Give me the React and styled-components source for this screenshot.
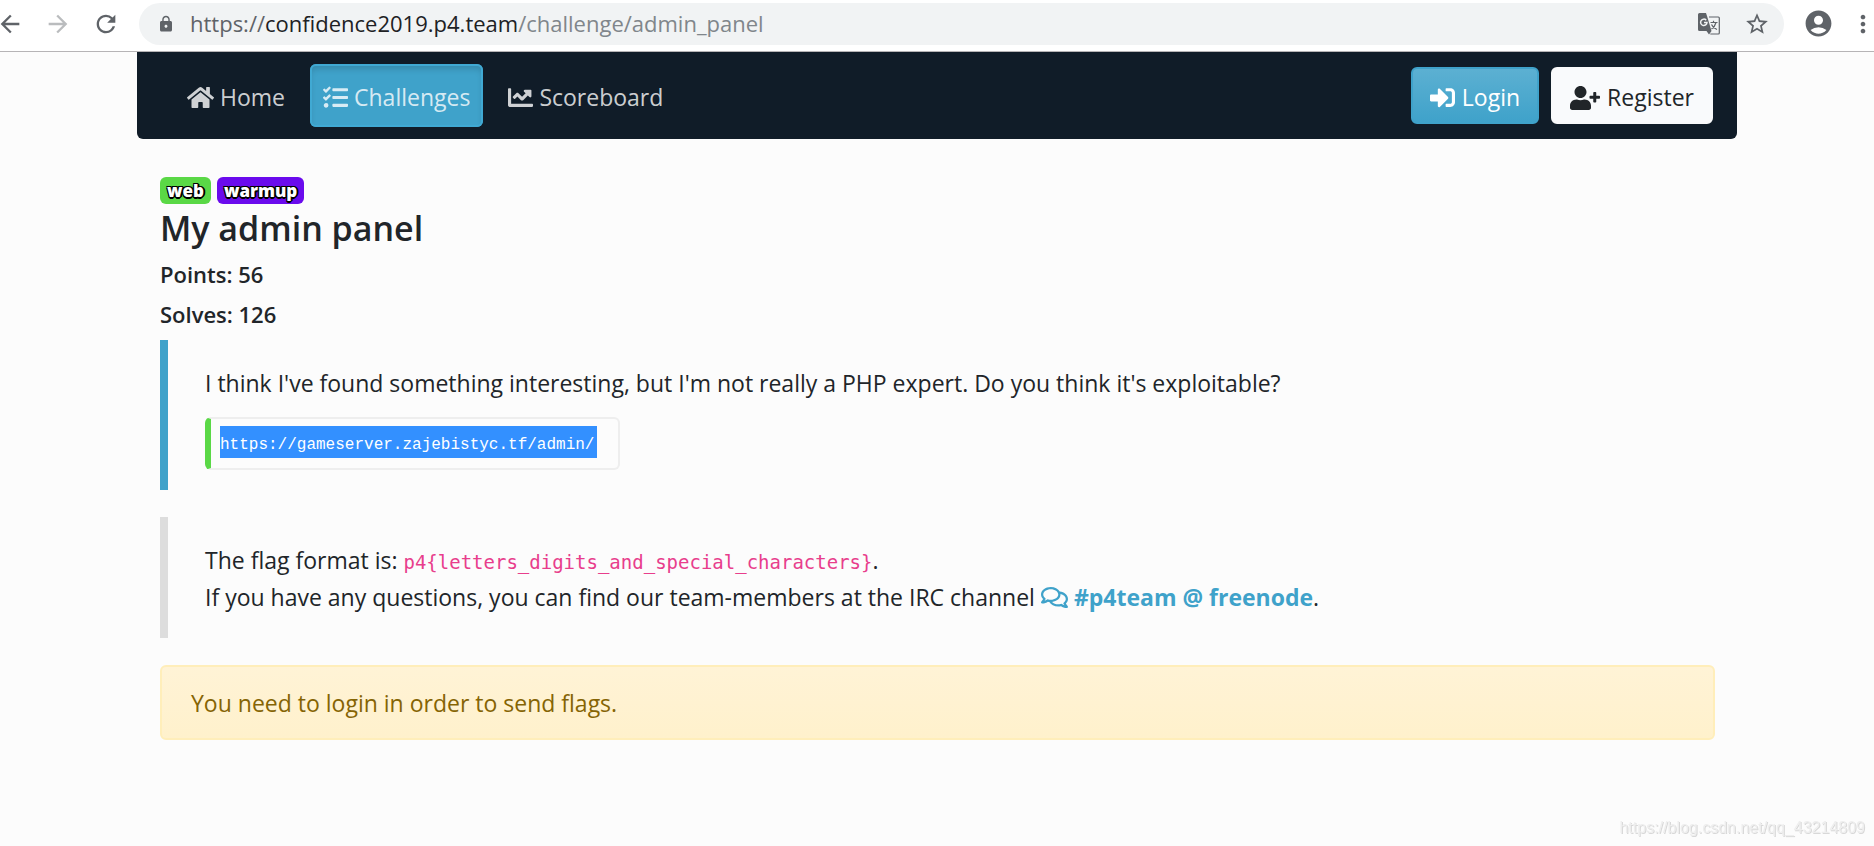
import React from 'react'
import styled, { createGlobalStyle } from 'styled-components'
import {
  FaHome,
  FaTasks,
  FaChartLine,
  FaSignInAlt,
  FaUserPlus,
  FaRegComments,
} from 'react-icons/fa'
import {
  MdArrowBack,
  MdArrowForward,
  MdRefresh,
  MdLock,
  MdStarBorder,
  MdAccountCircle,
  MdMoreVert,
} from 'react-icons/md'

const colors = {
  primary: '#3fa2ca',
  success: '#5ad846',
  text: '#212529',
  chrome: '#5f6368',
}

const GlobalStyle = createGlobalStyle`
  * {
    box-sizing: border-box;
  }

  body {
    margin: 0;
    background: #fcfcfc;
    color: ${colors.text};
    font-family: 'Open Sans', 'Noto Sans', sans-serif;
    font-size: 23px;
    line-height: 37px;
  }
`

const BrowserBar = styled.header`
  display: flex;
  align-items: center;
  height: 52px;
  padding: 0 0 4px;
  background: #ffffff;
  border-bottom: 1px solid #b6b4b6;
  overflow: hidden;
`

const ChromeButton = styled.button`
  display: flex;
  flex: 0 0 ${p => p.$width || 48}px;
  align-items: center;
  justify-content: center;
  min-width: 0;
  padding: 0;
  border: 0;
  background: none;
  color: ${p => (p.disabled ? '#babcbe' : colors.chrome)};
  font-size: ${p => p.$size || 28}px;

  svg {
    flex-shrink: 0;
  }
`

const HistoryButtons = styled.div`
  display: flex;
  margin: 0 9px 0 -14px;
`

const AddressBar = styled.div`
  display: flex;
  flex: 1;
  align-items: center;
  height: 42px;
  padding: 0 3px 0 18px;
  border-radius: 21px;
  background: #f1f3f4;
  color: ${colors.chrome};
  font-size: 18px;
`

const Address = styled.div`
  flex: 1;
  margin-left: 15px;
  color: #80868b;
  font-size: 22px;
  white-space: nowrap;

  span {
    color: ${colors.chrome};
  }

  strong {
    color: #202124;
    font-weight: 400;
  }
`

const Container = styled.div`
  max-width: 1600px;
  margin: 0 auto;
`

const Navbar = styled.nav`
  display: flex;
  align-items: center;
  justify-content: space-between;
  padding: 12px 24px;
  border-radius: 0 0 6px 6px;
  background: #101c28;
`

const NavGroup = styled.div`
  display: flex;
  align-items: center;
  gap: 12px;
`

const NavLink = styled.a`
  display: flex;
  align-items: center;
  gap: 6px;
  padding: 15px 13px 11px;
  margin-left: ${p => (p.$first ? 13 : 0)}px;
  border-radius: 6px;
  color: rgba(255, 255, 255, 0.8);
  text-decoration: none;

  ${p =>
    p.$active &&
    `
    background: ${colors.primary};
    box-shadow: inset 0 0 0 2px #40a9d3, inset 0 5px 6px rgba(0, 0, 0, 0.15);
  `}
`

const NavButton = styled.button`
  display: flex;
  align-items: center;
  gap: 7px;
  padding: 10px 17px 6px;
  border: 2px solid ${p => (p.$primary ? colors.primary : '#f8f9fa')};
  border-radius: 6px;
  background: ${p =>
    p.$primary ? 'linear-gradient(180deg, #5cb0d2, #3fa2ca)' : '#f9fafc'};
  color: ${p => (p.$primary ? '#ffffff' : colors.text)};
  font: inherit;
`

const Content = styled.main`
  padding: 38px 22px 0 23px;
`

const Badges = styled.div`
  display: flex;
  gap: 6px;
`

const Badge = styled.span`
  padding: 0 7px;
  border-radius: 6px;
  background: ${p => p.color};
  color: #ffffff;
  font-size: 17px;
  font-weight: 800;
  line-height: 27px;
  text-shadow: -1px -1px 0 #000, 1px -1px 0 #000, -1px 1px 0 #000,
    1px 1px 0 #000, 0 2px 0 #000, 2px 0 0 #000;
`

const Title = styled.h1`
  margin: 0 0 8px;
  font-size: 34px;
  font-weight: 600;
  line-height: 48px;
`

const Stat = styled.h2`
  margin: 0 0 12px;
  font-size: 22px;
  font-weight: 600;
  line-height: 28px;
`

const Callout = styled.blockquote`
  margin: 0 0 27px;
  padding: ${p => p.$padding || '25px 37px 22px'};
  border-left: 8px solid ${p => p.color};

  p {
    margin: 0;
  }
`

const Snippet = styled.pre`
  width: fit-content;
  margin: 15px 0 0;
  padding: 7px 21px 10px 9px;
  border: 2px solid #eeeeee;
  border-left: 6px solid ${colors.success};
  border-radius: 6px;
  font-size: 16px;
  line-height: 26px;
`

const Selected = styled.code`
  display: block;
  padding: 6px 3px 0 0;
  background: #3390ff;
  color: #ffffff;
  font-family: 'Liberation Mono', monospace;
`

const Flag = styled.code`
  color: #e83e8c;
  font-family: 'DejaVu Sans Mono', monospace;
  font-size: 19px;
  line-height: 1;
`

const ChannelLink = styled.a`
  color: ${colors.primary};
  font-weight: 700;
  text-decoration: none;

  svg {
    vertical-align: -5px;
  }
`

const Alert = styled.div`
  padding: 18px 29px 16px;
  border: 2px solid #ffeeba;
  border-radius: 6px;
  background: linear-gradient(180deg, #fff3d6, #fff1cc);
  color: #856404;
`

const Watermark = styled.footer`
  position: fixed;
  right: 9px;
  bottom: 8px;
  color: #eeeeee;
  font-family: 'Liberation Sans', sans-serif;
  font-size: 16px;
  line-height: 20px;
  text-shadow: 1px 1px 0 #d8d8d8;
`

// solid sheet in front, outlined sheet behind it
const TranslateIcon = () => (
  <svg width="22" height="22" viewBox="0 0 22 22" fill="none">
    <path
      d="M11 4h9.300q1 0 1 1v15q0 1-1 1h-8"
      stroke="currentColor"
      strokeWidth="1.200"
    />
    <path
      d="M1.500 0h6.500l1 3 4.500 15h-12Q0 18 0 16.500v-15Q0 0 1.500 0zM8.500 18h5l-2.500 3.500z"
      fill="currentColor"
    />
    <path
      d="M8.200 7.200A3.200 3.200 0 1 0 9 9.500H6"
      stroke="#f1f3f4"
      strokeWidth="1.500"
    />
    <path
      d="M12.500 9.500h7M15.500 7.800v1.700M18 9.500q-1 4-4.500 6.500M13.500 11.500q1.500 3.500 5.500 5"
      stroke="currentColor"
      strokeWidth="1.200"
    />
  </svg>
)

export default function App() {
  return (
    <>
      <GlobalStyle />
      <BrowserBar>
        <HistoryButtons>
          <ChromeButton aria-label="Back">
            <MdArrowBack />
          </ChromeButton>
          <ChromeButton aria-label="Forward" disabled>
            <MdArrowForward />
          </ChromeButton>
          <ChromeButton aria-label="Reload">
            <MdRefresh />
          </ChromeButton>
        </HistoryButtons>
        <AddressBar>
          <MdLock />
          <Address>
            <span>https://</span>
            <strong>confidence2019.p4.team</strong>/challenge/admin_panel
          </Address>
          <ChromeButton aria-label="Translate this page">
            <TranslateIcon />
          </ChromeButton>
          <ChromeButton aria-label="Bookmark this page" $size={26}>
            <MdStarBorder />
          </ChromeButton>
        </AddressBar>
        <ChromeButton aria-label="Profile" $width={68} $size={31}>
          <MdAccountCircle />
        </ChromeButton>
        <ChromeButton aria-label="Menu" $width={22}>
          <MdMoreVert />
        </ChromeButton>
      </BrowserBar>

      <Container>
        <Navbar>
          <NavGroup>
            <NavLink href="#home" $first>
              <FaHome size={27} />
              Home
            </NavLink>
            <NavLink href="#challenges" $active>
              <FaTasks size={25} />
              Challenges
            </NavLink>
            <NavLink href="#scoreboard">
              <FaChartLine size={25} />
              Scoreboard
            </NavLink>
          </NavGroup>
          <NavGroup>
            <NavButton $primary>
              <FaSignInAlt size={25} />
              Login
            </NavButton>
            <NavButton>
              <FaUserPlus size={30} />
              Register
            </NavButton>
          </NavGroup>
        </Navbar>

        <Content>
          <Badges>
            <Badge color={colors.success}>web</Badge>
            <Badge color="#6a0bed">warmup</Badge>
          </Badges>
          <Title>My admin panel</Title>
          <Stat>Points: 56</Stat>
          <Stat>Solves: 126</Stat>

          <Callout color={colors.primary} $padding="25px 37px 20px">
            <p>
              I think I've found something interesting, but I'm not really a PHP
              expert. Do you think it's exploitable?
            </p>
            <Snippet>
              <Selected>https://gameserver.zajebistyc.tf/admin/</Selected>
            </Snippet>
          </Callout>

          <Callout color="#dddddd">
            <p>
              The flag format is:{' '}
              <Flag>{'p4{letters_digits_and_special_characters}'}</Flag>.
              <br />
              If you have any questions, you can find our team-members at the
              IRC channel{' '}
              <ChannelLink href="#irc">
                <FaRegComments size={27} /> #p4team @ freenode
              </ChannelLink>
              .
            </p>
          </Callout>

          <Alert role="alert">You need to login in order to send flags.</Alert>
        </Content>
      </Container>
      <Watermark>https://blog.csdn.net/qq_43214809</Watermark>
    </>
  )
}
